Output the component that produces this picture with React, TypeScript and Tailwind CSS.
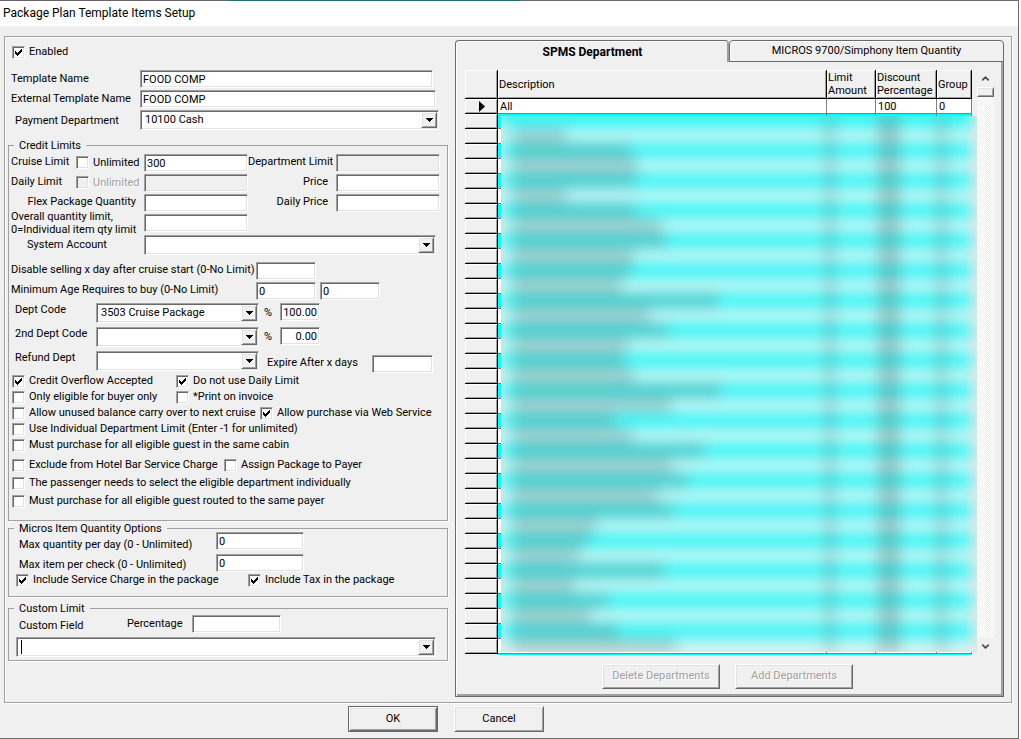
import React, { useState } from 'react';
import { ChevronDown, ChevronUp } from 'lucide-react';
import clsx from 'clsx';

const sunken =
  'border border-[#a0a0a0] border-r-white border-b-white shadow-[inset_1px_1px_0_#696969,inset_-1px_-1px_0_#e3e3e3]';
const raised =
  'border border-white border-r-[#696969] border-b-[#696969] bg-[#f0f0f0] shadow-[inset_1px_1px_0_#e3e3e3,inset_-1px_-1px_0_#a0a0a0]';

// Width in pixels of the obscured description of each department row
const maskedRows = [
  0, 53, 118, 125, 123, 53, 123, 148, 153, 121, 118, 108, 205, 136, 155, 115, 111, 121,
  208, 158, 101, 120, 191, 158, 175, 145, 161, 83, 76, 65, 151, 61, 95, 76, 105, 163,
];

interface FieldProps {
  id: string;
  label?: string;
  value?: string;
  className?: string;
  disabled?: boolean;
}

function TextBox({ id, label, value = '', className, disabled }: FieldProps) {
  return (
    <input
      id={id}
      type="text"
      aria-label={label}
      defaultValue={value}
      disabled={disabled}
      className={clsx(
        'block h-[18px] min-w-0 px-0.5 outline-none',
        disabled ? 'bg-[#f0f0f0]' : 'bg-white',
        sunken,
        className
      )}
    />
  );
}

function ComboBox({ id, value = '', className, caret }: FieldProps & { caret?: boolean }) {
  return (
    <div className={clsx('relative', className)}>
      <select
        id={id}
        defaultValue={value}
        className={clsx('block h-5 w-full appearance-none bg-white pr-5 pl-1 outline-none', sunken)}
      >
        <option value={value}>{value}</option>
      </select>
      {caret && <span className="absolute top-[3px] left-[5px] h-3.5 w-px bg-black" />}
      <span
        className={clsx(
          'pointer-events-none absolute top-0.5 right-0.5 flex h-4 w-4 items-center justify-center',
          raised
        )}
      >
        <svg width="7" height="4" viewBox="0 0 7 4" shapeRendering="crispEdges">
          <path d="M0 0h7v1H6v1H5v1H4v1H3V3H2V2H1V1H0z" />
        </svg>
      </span>
    </div>
  );
}

interface CheckProps {
  label: string;
  checked?: boolean;
  disabled?: boolean;
  className?: string;
}

function Check({ label, checked, disabled, className }: CheckProps) {
  return (
    <label className={clsx('flex h-4 items-center gap-1', className)}>
      <span className="relative block h-[13px] w-[13px] shrink-0">
        <input
          type="checkbox"
          defaultChecked={checked}
          disabled={disabled}
          className={clsx(
            'peer block h-[13px] w-[13px] appearance-none',
            disabled ? 'bg-[#f0f0f0]' : 'bg-white',
            sunken
          )}
        />
        <svg
          className="pointer-events-none absolute top-[3px] left-[3px] hidden peer-checked:block"
          width="7"
          height="7"
          viewBox="0 0 7 7"
          shapeRendering="crispEdges"
        >
          <path d="M0 2h1v1h1v1h1V3h1V2h1V1h1V0h1v3H6v1H5v1H4v1H3v1H2V6H1V5H0z" />
        </svg>
      </span>
      <span className={clsx('pt-px', disabled && 'text-[#a0a0a0] [text-shadow:1px_1px_0_#fff]')}>{label}</span>
    </label>
  );
}

function Group({ title, className, children }: { title: string; className?: string; children: React.ReactNode }) {
  return (
    <fieldset
      className={clsx(
        'min-w-0 border border-[#a0a0a0] shadow-[1px_1px_0_#fff]',
        className
      )}
    >
      <legend className="ml-[5px] h-3.5 bg-[#f0f0f0] px-[5px] leading-4">{title}</legend>
      {children}
    </fieldset>
  );
}

function PushButton({ label, className, disabled }: { label: string; className?: string; disabled?: boolean }) {
  return (
    <button
      type="button"
      disabled={disabled}
      className={clsx(
        'text-center',
        raised,
        disabled && 'text-[#a0a0a0] [text-shadow:1px_1px_0_#fff]',
        className
      )}
    >
      {label}
    </button>
  );
}

function TemplateFields() {
  return (
    <div className="mt-2.5 grid grid-cols-[129px_1fr] gap-y-0.5 pl-[3px]">
      <label htmlFor="name" className="leading-[18px]">Template Name</label>
      <TextBox id="name" value="FOOD COMP" className="w-[293px]" />
      <label htmlFor="extName" className="leading-[18px]">External Template Name</label>
      <TextBox id="extName" value="FOOD COMP" className="w-[296px]" />
      <label htmlFor="payDept" className="pl-1 leading-[22px]">Payment Department</label>
      <ComboBox id="payDept" value="10100 Cash" className="w-[299px]" />
    </div>
  );
}

function CreditLimits() {
  return (
    <Group title="Credit Limits" className="mt-1.5 pb-[11px]">
      <div className="mt-0.5 grid grid-cols-[65px_68px_104px_88px_104px] gap-y-0.5 pl-0.5 leading-4">
        <label htmlFor="cruise">Cruise Limit</label>
        <Check label="Unlimited" />
        <TextBox id="cruise" value="300" />
        <label htmlFor="deptLimit" className="pr-[3px] text-right">Department Limit</label>
        <TextBox id="deptLimit" disabled />

        <label htmlFor="daily">Daily Limit</label>
        <Check label="Unlimited" disabled />
        <TextBox id="daily" disabled />
        <label htmlFor="price" className="pr-2 text-right">Price</label>
        <TextBox id="price" />

        <label htmlFor="flex" className="col-span-2 pr-2 text-right">Flex Package Quantity</label>
        <TextBox id="flex" />
        <label htmlFor="dailyPrice" className="pr-2 text-right">Daily Price</label>
        <TextBox id="dailyPrice" />

        <label htmlFor="overall" className="col-span-2 -my-1 leading-[13px]">
          Overall quantity limit,<br />0=Individual item qty limit
        </label>
        <TextBox id="overall" />
      </div>
      <div className="mt-[3px] flex pl-0.5">
        <label htmlFor="sysAccount" className="w-[133px] pl-4 leading-5">System Account</label>
        <ComboBox id="sysAccount" className="w-[292px]" />
      </div>

      <div className="mt-[7px] grid grid-cols-[245px_60px_60px] gap-y-0.5 pl-0.5 leading-4">
        <label htmlFor="disableDays">Disable selling x day after cruise start (0-No Limit)</label>
        <TextBox id="disableDays" />
        <span />
        <label htmlFor="minAge">Minimum Age Requires to buy (0-No Limit)</label>
        <TextBox id="minAge" value="0" />
        <TextBox id="maxAge" label="Maximum age" value="0" className="ml-1 w-[60px]" />
      </div>

      <div className="mt-[3px] grid grid-cols-[82px_163px_1fr] gap-y-1 pl-[5px]">
        <label htmlFor="dept" className="pl-px leading-[14px]">Dept Code</label>
        <ComboBox id="dept" value="3503 Cruise Package" />
        <div className="flex">
          <label htmlFor="deptPct" className="w-[21px] pl-[5px] leading-5">%</label>
          <TextBox id="deptPct" value="100.00" className="w-10 text-right" />
        </div>
        <label htmlFor="dept2" className="pl-px leading-[14px]">2nd Dept Code</label>
        <ComboBox id="dept2" />
        <div className="flex">
          <label htmlFor="dept2Pct" className="w-[21px] pl-[5px] leading-5">%</label>
          <TextBox id="dept2Pct" value="0.00" className="w-10 text-right" />
        </div>
        <label htmlFor="refund" className="pl-px leading-[14px]">Refund Dept</label>
        <ComboBox id="refund" />
        <div className="flex pt-1">
          <label htmlFor="expire" className="w-[113px] pl-2 leading-4">Expire After x days</label>
          <TextBox id="expire" className="w-[61px]" />
        </div>
      </div>

      <div className="pl-[3px]">
        <div className="flex">
          <Check label="Credit Overflow Accepted" checked className="w-[164px]" />
          <Check label="Do not use Daily Limit" checked />
        </div>
        <div className="flex">
          <Check label="Only eligible for buyer only" className="w-[164px]" />
          <Check label="*Print on invoice" />
        </div>
        <div className="flex">
          <Check label="Allow unused balance carry over to next cruise" className="w-[248px]" />
          <Check label="Allow purchase via Web Service" checked />
        </div>
        <Check label="Use Individual Department Limit (Enter -1 for unlimited)" />
        <Check label="Must purchase for all eligible guest in the same cabin" />
        <div className="mt-1 flex">
          <Check label="Exclude from Hotel Bar Service Charge" className="w-[212px]" />
          <Check label="Assign Package to Payer" />
        </div>
        <Check label="The passenger needs to select the eligible department individually" className="mt-0.5" />
        <Check label="Must purchase for all eligible guest routed to the same payer" className="mt-0.5" />
      </div>
    </Group>
  );
}

function MicrosOptions() {
  return (
    <Group title="Micros Item Quantity Options" className="pb-2">
      <div className="-mt-[3px] grid grid-cols-[197px_88px] gap-y-1 pl-2.5">
        <label htmlFor="maxDay" className="h-[18px] pt-1 leading-[18px]">Max quantity per day (0 - Unlimited)</label>
        <TextBox id="maxDay" value="0" />
        <label htmlFor="maxCheck" className="h-[18px] pt-0.5 leading-[18px]">Max item per check (0 - Unlimited)</label>
        <TextBox id="maxCheck" value="0" />
      </div>
      <div className="flex pl-[7px]">
        <Check label="Include Service Charge in the package" checked className="w-[232px]" />
        <Check label="Include Tax in the package" checked />
      </div>
    </Group>
  );
}

function CustomLimit() {
  return (
    <Group title="Custom Limit" className="mt-1 pb-[3px]">
      <div className="grid grid-cols-[108px_65px_89px] pl-2.5 leading-[18px]">
        <label htmlFor="customField" className="h-[18px] pt-0.5">Custom Field</label>
        <label htmlFor="pct">Percentage</label>
        <TextBox id="pct" />
      </div>
      <ComboBox id="customField" className="mt-1 ml-[7px] w-[420px]" caret />
    </Group>
  );
}

function DepartmentTable() {
  const head = 'border-r border-b border-black px-px text-left font-normal shadow-[inset_1px_1px_0_#fff,inset_-1px_-1px_0_#a0a0a0]';
  const cell = 'border-r border-b border-[#808080] px-0.5';
  return (
    <div className="relative flex-1">
      <table className="w-full table-fixed border-separate border-spacing-0 leading-[13px]">
        <colgroup>
          <col className="w-[33px]" />
          <col />
          <col className="w-[49px]" />
          <col className="w-[61px]" />
          <col className="w-[35px]" />
        </colgroup>
        <thead>
          <tr className="h-[29px]">
            <th className={head} />
            <th className={head}>Description</th>
            <th className={clsx(head, 'whitespace-normal')}>Limit Amount</th>
            <th className={clsx(head, 'whitespace-normal')}>Discount Percentage</th>
            <th className={head}>Group</th>
          </tr>
        </thead>
        <tbody>
          <tr className="h-[15px] bg-white">
            <th className={clsx(head, 'bg-[#f0f0f0]')}>
              <svg className="ml-[13px]" width="6" height="11" viewBox="0 0 6 11">
                <path d="M0 0l6 5.500L0 11z" />
              </svg>
            </th>
            <td className={cell}>All</td>
            <td className={cell} />
            <td className={cell}>100</td>
            <td className={cell}>0</td>
          </tr>
          {maskedRows.map((_, i) => (
            <tr key={i} className={clsx('h-[15px]', i % 2 === 0 ? 'bg-[#00ffff]' : 'bg-white')}>
              <th className={clsx(head, 'bg-[#f0f0f0]')} />
              <td className={cell} />
              <td className={cell} />
              <td className={cell} />
              <td className={cell} />
            </tr>
          ))}
        </tbody>
      </table>
      <div className="ml-[33px] h-px bg-[#00ffff]" />

      {/* privacy mask over the department rows */}
      <div className="absolute top-[46px] -right-[5px] bottom-[3px] left-9 overflow-hidden bg-[#e6e6e6]">
        <div className="-mt-[18px] mr-[5px] blur-[7px]">
          <div className="h-[15px] bg-[#48f6f6]" />
          {maskedRows.map((width, i) => (
            <div
              key={i}
              className={clsx('flex h-[15px] justify-between', i % 2 === 0 ? 'bg-[#38f6f6]' : 'bg-[#c6f5f5]')}
            >
              <div className="ml-3 bg-[#606060]/25" style={{ width }} />
              <div className="flex">
                <div className="mr-[42px] w-3 bg-[#606060]/20" />
                <div className="mr-9 w-[22px] bg-[#606060]/30" />
                <div className="mr-6 w-3 bg-[#606060]/20" />
              </div>
            </div>
          ))}
        </div>
      </div>
    </div>
  );
}

function ScrollBar() {
  return (
    <div className="ml-[5px] flex w-[17px] flex-col bg-[repeating-conic-gradient(#fff_0_25%,#f0f0f0_0_50%)] bg-[length:2px_2px]">
      <button type="button" aria-label="Scroll up" className="flex h-[17px] items-center justify-center bg-[#f0f0f0]">
        <ChevronUp size={11} strokeWidth={4} className="text-[#505050]" />
      </button>
      <div className={clsx('h-2.5', raised)} />
      <div className="flex-1" />
      <button type="button" aria-label="Scroll down" className="flex h-[17px] items-center justify-center bg-[#f0f0f0]">
        <ChevronDown size={11} strokeWidth={4} className="text-[#505050]" />
      </button>
    </div>
  );
}

function DepartmentTabs() {
  const [tab, setTab] = useState(0);
  const names = ['SPMS Department', 'MICROS 9700/Simphony Item Quantity'];
  return (
    <div className="flex min-w-0 flex-1 flex-col">
      <div className="flex h-[22px]" role="tablist">
        {names.map((name, i) => (
          <button
            key={name}
            type="button"
            role="tab"
            aria-selected={tab === i}
            onClick={() => setTab(i)}
            className={clsx(
              'flex-1 rounded-t-[4px] border-[#696969]',
              tab === i
                ? 'border-t border-l text-[12px] font-bold shadow-[inset_1px_1px_0_#fff,inset_-2px_0_0_#a0a0a0]'
                : 'border pt-px shadow-[inset_1px_1px_0_#fff]'
            )}
          >
            {name}
          </button>
        ))}
      </div>
      <div className="flex flex-1 flex-col border border-t-0 border-[#696969] px-[9px] pt-2 pb-[7px] shadow-[inset_1px_0_0_#fff,inset_-2px_-2px_0_#a0a0a0]">
        <div className="flex">
          <DepartmentTable />
          <ScrollBar />
        </div>
        <div className="mt-[9px] flex justify-center gap-[15px] pr-1">
          <PushButton label="Delete Departments" disabled className="h-[25px] w-[118px]" />
          <PushButton label="Add Departments" disabled className="h-[25px] w-[118px]" />
        </div>
      </div>
    </div>
  );
}

export default function App() {
  return (
    <div className="min-h-screen bg-white pr-0.5 font-[Roboto,Tahoma,sans-serif] text-[11px] whitespace-nowrap text-black">
      <div className="border-r border-b border-[#696969] bg-[#f0f0f0]">
        <div className="h-px bg-[linear-gradient(to_right,#6b6265_0_230px,#1f7275_230px_520px,#6b6b6b_520px)]" />
        <h1 className="bg-white pl-[3px] text-[12px] leading-[25px]">Package Plan Template Items Setup</h1>
        <main className="mt-2.5 mr-1.5 ml-1 flex border border-[#a0a0a0] pr-[7px] shadow-[1px_1px_0_#fff,inset_1px_1px_0_#fff]">
          <div className="w-[450px] shrink-0 pt-[7px] pr-[7px] pl-[3px]">
            <Check label="Enabled" checked className="pl-1" />
            <TemplateFields />
            <CreditLimits />
            <MicrosOptions />
            <CustomLimit />
          </div>
          <div className="flex min-w-0 flex-1 pt-[3px] pb-[5px]">
            <DepartmentTabs />
          </div>
        </main>
        <div className="flex justify-center gap-4 py-[3px] pr-[126px] pb-1.5">
          <div className="border border-[#696969]">
            <PushButton label="OK" className="h-6 w-[88px]" />
          </div>
          <PushButton label="Cancel" className="h-[26px] w-[90px]" />
        </div>
      </div>
    </div>
  );
}
